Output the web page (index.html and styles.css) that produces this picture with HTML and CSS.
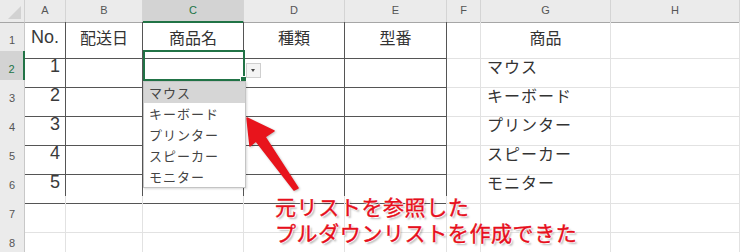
FILE: index.html
```html
<!DOCTYPE html>
<html lang="ja">
<head>
    <meta charset="UTF-8">
    <title>プルダウンリスト</title>
    <link rel="stylesheet" href="styles.css">
</head>
<body>

<div class="sheet">
    <!-- 列見出し -->
    <div class="row head">
        <div class="corner"><span class="tri"></span></div>
        <div class="ch">A</div>
        <div class="ch">B</div>
        <div class="ch sel">C</div>
        <div class="ch">D</div>
        <div class="ch">E</div>
        <div class="ch">F</div>
        <div class="ch">G</div>
        <div class="ch">H</div>
    </div>

    <div class="row">
        <div class="rh">1</div>
        <div class="c t mid no">No.</div>
        <div class="c t mid">配送日</div>
        <div class="c t mid">商品名</div>
        <div class="c t mid">種類</div>
        <div class="c t mid">型番</div>
        <div class="c"></div>
        <div class="c mid">商品</div>
        <div class="c"></div>
    </div>
    <div class="row">
        <div class="rh sel">2</div>
        <div class="c t num">1</div>
        <div class="c t"></div>
        <div class="c t"></div>
        <div class="c t"></div>
        <div class="c t"></div>
        <div class="c"></div>
        <div class="c item">マウス</div>
        <div class="c"></div>
    </div>
    <div class="row">
        <div class="rh">3</div>
        <div class="c t num">2</div>
        <div class="c t"></div>
        <div class="c t"></div>
        <div class="c t"></div>
        <div class="c t"></div>
        <div class="c"></div>
        <div class="c item">キーボード</div>
        <div class="c"></div>
    </div>
    <div class="row">
        <div class="rh">4</div>
        <div class="c t num">3</div>
        <div class="c t"></div>
        <div class="c t"></div>
        <div class="c t"></div>
        <div class="c t"></div>
        <div class="c"></div>
        <div class="c item">プリンター</div>
        <div class="c"></div>
    </div>
    <div class="row">
        <div class="rh">5</div>
        <div class="c t num">4</div>
        <div class="c t"></div>
        <div class="c t"></div>
        <div class="c t"></div>
        <div class="c t"></div>
        <div class="c"></div>
        <div class="c item">スピーカー</div>
        <div class="c"></div>
    </div>
    <div class="row">
        <div class="rh">6</div>
        <div class="c t num">5</div>
        <div class="c t"></div>
        <div class="c t"></div>
        <div class="c t"></div>
        <div class="c t"></div>
        <div class="c"></div>
        <div class="c item">モニター</div>
        <div class="c"></div>
    </div>
    <div class="row">
        <div class="rh">7</div>
        <div class="c"></div><div class="c"></div><div class="c"></div><div class="c"></div>
        <div class="c"></div><div class="c"></div><div class="c"></div><div class="c"></div>
    </div>
    <div class="row">
        <div class="rh">8</div>
        <div class="c"></div><div class="c"></div><div class="c"></div><div class="c"></div>
        <div class="c"></div><div class="c"></div><div class="c"></div><div class="c"></div>
    </div>

    <!-- 選択中のセル C2 -->
    <div class="cursor"><span class="handle"></span></div>
    <div class="dd-btn"><span class="dd-arrow"></span></div>

    <!-- プルダウンの一覧 -->
    <div class="dropdown">
        <div class="opt on">マウス</div>
        <div class="opt">キーボード</div>
        <div class="opt">プリンター</div>
        <div class="opt">スピーカー</div>
        <div class="opt">モニター</div>
    </div>

    <!-- 注釈の矢印 -->
    <svg class="arrow" width="740" height="252" viewBox="0 0 740 252">
        <polygon points="247,118 274,131 265,137 298,188 294,190 256,141 250,146" fill="#e8141c" stroke="#e8141c" stroke-width="1.5" stroke-linejoin="round"/>
    </svg>

    <div class="note">
        <div class="line">元リストを参照した</div>
        <div class="line">プルダウンリストを作成できた</div>
    </div>
</div>

</body>
</html>
```

FILE: styles.css
```css
body {
    margin: 0;
    background: #fff;
    font-family: "Noto Sans CJK JP", "Noto Sans", sans-serif;
}
.sheet {
    position: relative;
    width: 740px;
    height: 252px;
    overflow: hidden;
}
.row {
    display: grid;
    grid-template-columns: 25px 41px 77px 101px 101px 102px 34px 130px 129px;
    height: 29px;
}
.row.head {
    height: 22px;
}
.row > div {
    box-sizing: border-box;
}
.corner {
    position: relative;
    background: #ebebeb;
    border-right: 1px solid #d0d0d0;
    border-bottom: 1px solid #a6a6a6;
}
.tri {
    position: absolute;
    right: 3px;
    bottom: 3px;
    width: 0;
    height: 0;
    border-left: 13px solid transparent;
    border-bottom: 13px solid #d2d2d2;
}
.ch {
    background: #ebebeb;
    border-right: 1px solid #d4d4d4;
    border-bottom: 1px solid #a6a6a6;
    color: #555;
    font-size: 11px;
    font-family: "Liberation Sans", "Noto Sans CJK JP", sans-serif;
    text-align: center;
    line-height: 21px;
}
.ch.sel {
    background: #d3d3d3;
    border-bottom: 2px solid #217346;
    color: #217346;
}
.rh {
    background: #ebebeb;
    border-right: 1px solid #c8c8c8;
    border-bottom: 1px solid #d8d8d8;
    color: #555;
    font-size: 11px;
    font-family: "Liberation Sans", "Noto Sans CJK JP", sans-serif;
    text-align: center;
    line-height: 36px;
}
.rh.sel {
    background: #d3d3d3;
    border-right: 2px solid #217346;
    color: #217346;
}
.c {
    border-right: 1px solid #e2e2e2;
    border-bottom: 1px solid #e2e2e2;
    color: #333;
    font-size: 16px;
    line-height: 30px;
    white-space: nowrap;
}
.c.t {
    border-right-color: #555;
    border-bottom-color: #555;
}
.mid {
    text-align: center;
}
.num,
.no {
    font-size: 18px;
    font-family: "Liberation Sans", sans-serif;
    color: #3a3a3a;
    line-height: 31px;
}
.num {
    text-align: right;
    padding-right: 5px;
}
.item {
    padding-left: 6px;
    letter-spacing: 1px;
}
.cursor {
    position: absolute;
    left: 143px;
    top: 50px;
    width: 102px;
    height: 31px;
    box-sizing: border-box;
    border: 2px solid #217346;
}
.handle {
    position: absolute;
    right: -4px;
    bottom: -4px;
    width: 5px;
    height: 5px;
    background: #217346;
    border: 1px solid #fff;
}
.dd-btn {
    position: absolute;
    left: 246px;
    top: 63px;
    width: 15px;
    height: 15px;
    box-sizing: border-box;
    background: #f4f4f4;
    border: 1px solid #cfcfcf;
}
.dd-arrow {
    position: absolute;
    left: 4px;
    top: 5px;
    width: 0;
    height: 0;
    border-left: 2.5px solid transparent;
    border-right: 2.5px solid transparent;
    border-top: 3px solid #444;
}
.dropdown {
    position: absolute;
    left: 143px;
    top: 81px;
    width: 103px;
    height: 107px;
    box-sizing: border-box;
    background: #fff;
    border: 1px solid #c4c4c4;
    box-shadow: 1px 1px 2px rgba(0, 0, 0, 0.15);
}
.opt {
    height: 21px;
    line-height: 21px;
    padding-left: 5px;
    font-size: 13px;
    letter-spacing: 1px;
    color: #444;
}
.opt.on {
    background: #d6d6d6;
}
.arrow {
    position: absolute;
    left: 0;
    top: 0;
    filter: drop-shadow(1px 1px 1px rgba(0, 0, 0, 0.25));
}
.note {
    position: absolute;
    left: 275px;
    top: 193px;
    font-size: 21px;
    letter-spacing: 0.6px;
    color: #e60f1c;
    white-space: nowrap;
    -webkit-text-stroke: 0.4px #e60f1c;
    text-shadow: 1px 0 0 #fff, -1px 0 0 #fff, 0 1px 0 #fff, 0 -1px 0 #fff,
        2px 2px 2px rgba(0, 0, 0, 0.3);
}
.note .line {
    height: 26px;
    line-height: 26px;
}
```
